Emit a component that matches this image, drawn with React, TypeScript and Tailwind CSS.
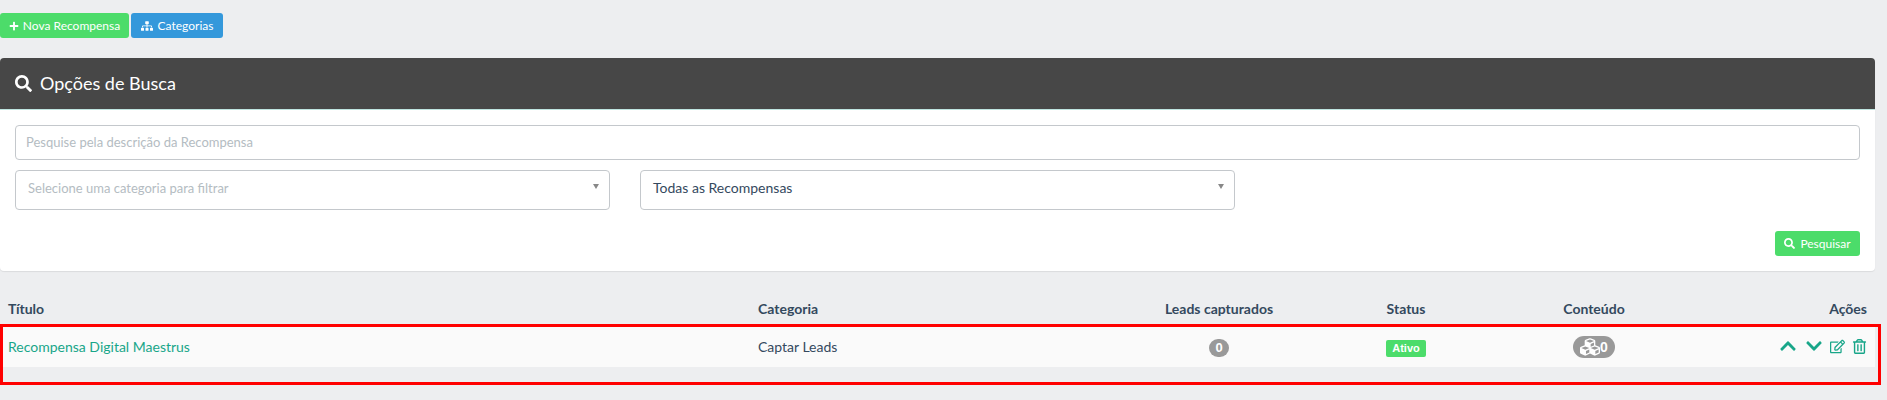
import { FaChevronDown, FaChevronUp, FaCubes, FaPlus, FaRegEdit, FaRegTrashAlt, FaSearch, FaSitemap } from "react-icons/fa";

function FakeSelect({ label, placeholder, className }: { label: string; placeholder?: boolean; className: string }) {
  return (
    <div className={`flex h-[40px] items-start justify-between rounded-[4px] border border-[#c4c8cc] pl-[12px] pr-[10px] pt-[7px] ${className}`}>
      <span className={placeholder ? "mt-[1px] text-[13px] text-[#b4bcc2]" : "text-[14px] leading-[20px] text-[#34495e]"}>{label}</span>
      <span className="mt-[6px] h-0 w-0 border-x-[3px] border-t-[5px] border-x-transparent border-t-[#888]" />
    </div>
  );
}

export default function App() {
  return (
    <div className="relative h-[400px] w-[1887px] overflow-hidden bg-[#edeef0] font-['Lato','Open_Sans',sans-serif]">
      {/* Top buttons */}
      <div className="flex gap-[2px] pt-[13px]">
        <button className="flex h-[25px] w-[129px] items-center justify-center gap-[4px] rounded-[3px] bg-[#4cdc6a] text-[12px] text-white">
          <FaPlus className="text-[10px]" />
          Nova Recompensa
        </button>
        <button className="flex h-[25px] w-[92px] items-center justify-center gap-[5px] rounded-[3px] bg-[#3498db] text-[12px] text-white">
          <FaSitemap className="text-[12px]" />
          Categorias
        </button>
      </div>

      {/* Search panel */}
      <div className="mt-[20px] h-[213px] w-[1875px] rounded-[4px] bg-white shadow-[0_1px_1px_rgba(0,0,0,0.08)]">
        <div className="flex h-[52px] items-center gap-[8px] rounded-t-[4px] border-b border-b-[#bfe5e0] bg-[#474747] pl-[15px] text-[18px] text-white">
          <FaSearch className="text-[17px]" />
          <span>Opções de Busca</span>
        </div>
        <div className="px-[15px] pt-[15px]">
          <input
            placeholder="Pesquise pela descrição da Recompensa"
            className="h-[35px] w-full rounded-[4px] border border-[#c4c8cc] px-[10px] pb-[1px] text-[13px] outline-none placeholder:text-[#b4bcc2]"
          />
          <div className="mt-[10px] flex gap-[30px]">
            <FakeSelect label="Selecione uma categoria para filtrar" placeholder className="w-[595px]" />
            <FakeSelect label="Todas as Recompensas" className="w-[595px]" />
          </div>
          <div className="mt-[21px] flex justify-end">
            <button className="flex h-[25px] w-[85px] items-center justify-center gap-[5px] rounded-[3px] bg-[#4cdc6a] text-[12px] text-white">
              <FaSearch className="text-[11px]" />
              Pesquisar
            </button>
          </div>
        </div>
      </div>

      {/* Results table */}
      <table className="mt-[24px] w-[1875px] table-fixed border-collapse text-[14px] text-[#34495e]">
        <thead>
          <tr className="h-[31px] border-b-2 border-b-[#dddddd] font-bold">
            <th className="w-[750px] pb-[4px] pl-[8px] text-left">Título</th>
            <th className="w-[400px] pb-[4px] pl-[8px] text-left">Categoria</th>
            <th className="w-[138px] pb-[4px] text-center">Leads capturados</th>
            <th className="w-[236px] pb-[4px] text-center">Status</th>
            <th className="w-[140px] pb-[4px] text-center">Conteúdo</th>
            <th className="pb-[4px] pr-[8px] text-right">Ações</th>
          </tr>
        </thead>
        <tbody>
          <tr className="h-[41px] bg-[#fafafa]">
            <td className="pb-[2px] pl-[8px] text-[#18a689]">Recompensa Digital Maestrus</td>
            <td className="pb-[2px] pl-[8px]">Captar Leads</td>
            <td className="pb-[2px] text-center">
              <span className="inline-block h-[18px] rounded-full bg-[#999] px-[6px] font-['Liberation_Sans',sans-serif] text-[13px] leading-[18px] font-bold text-white">0</span>
            </td>
            <td className="pb-[2px] text-center">
              <span className="inline-block h-[17px] rounded-[2px] bg-[#4cdc6a] px-[6px] font-['Liberation_Sans',sans-serif] text-[11px] leading-[17px] font-bold text-white">Ativo</span>
            </td>
            <td className="pb-[2px]">
              <span className="mx-auto mt-[2px] flex h-[22px] w-[42px] items-center justify-center rounded-full bg-[#999] font-['Liberation_Sans',sans-serif] text-[14px] font-bold text-white">
                <FaCubes className="text-[20px]" />0
              </span>
            </td>
            <td className="pb-[2px] pr-[8px]">
              <div className="flex items-center justify-end text-[#18a689]">
                <FaChevronUp className="text-[18px]" />
                <FaChevronDown className="ml-[8px] text-[18px]" />
                <FaRegEdit className="ml-[7px] text-[15px]" />
                <FaRegTrashAlt className="ml-[7px] text-[15px]" />
              </div>
            </td>
          </tr>
        </tbody>
      </table>

      {/* Red annotation rectangle */}
      <div className="absolute left-0 top-[324px] h-[61px] w-[1881px] border-[3px] border-[#ff0000]" />
    </div>
  );
}
